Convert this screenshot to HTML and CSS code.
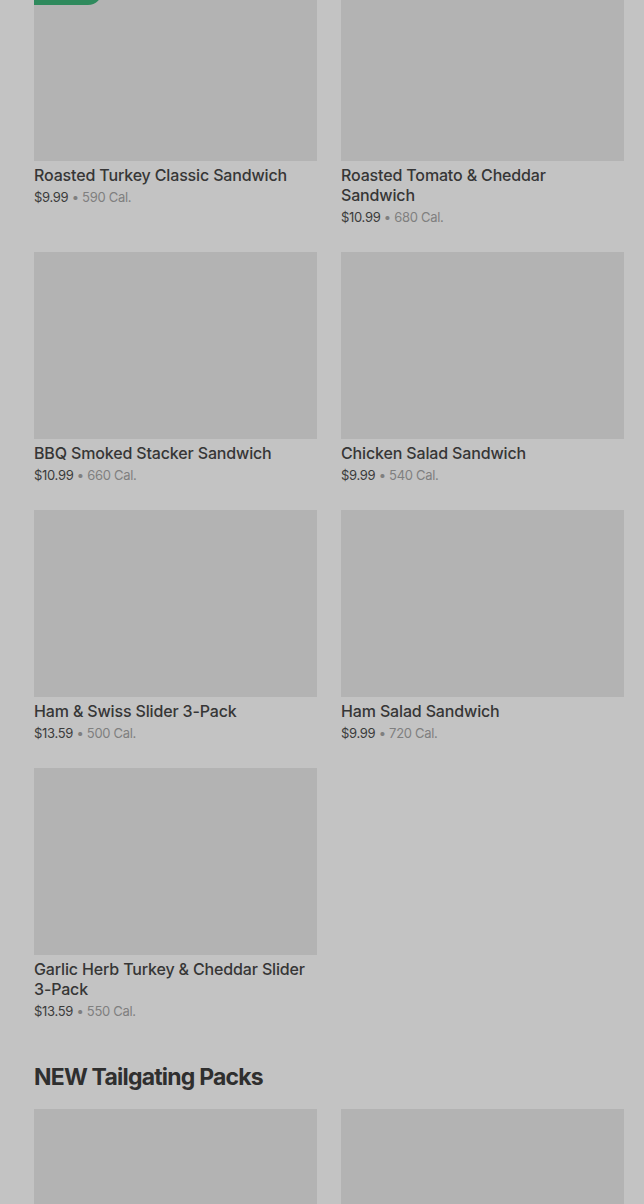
FILE: index.html
```html
<!DOCTYPE html>
<html lang="en">

<head>
    <meta charset="UTF-8">
    <meta name="viewport" content="width=device-width, initial-scale=1.0">
    <title>menu</title>
    <link rel="stylesheet" href="styles.css">
</head>

<body>

    <div class="page">
        <div class="grid">
            <div class="card">
                <div class="photo">
                    <span class="badge">Popular</span>
                </div>
                <h3 class="name">Roasted Turkey Classic Sandwich</h3>
                <p class="meta"><span class="price">$9.99</span> • 590 Cal.</p>
            </div>
            <div class="card">
                <div class="photo"></div>
                <h3 class="name">Roasted Tomato &amp; Cheddar Sandwich</h3>
                <p class="meta"><span class="price">$10.99</span> • 680 Cal.</p>
            </div>
            <div class="card">
                <div class="photo"></div>
                <h3 class="name">BBQ Smoked Stacker Sandwich</h3>
                <p class="meta"><span class="price">$10.99</span> • 660 Cal.</p>
            </div>
            <div class="card">
                <div class="photo"></div>
                <h3 class="name">Chicken Salad Sandwich</h3>
                <p class="meta"><span class="price">$9.99</span> • 540 Cal.</p>
            </div>
            <div class="card">
                <div class="photo"></div>
                <h3 class="name">Ham &amp; Swiss Slider 3-Pack</h3>
                <p class="meta"><span class="price">$13.59</span> • 500 Cal.</p>
            </div>
            <div class="card">
                <div class="photo"></div>
                <h3 class="name">Ham Salad Sandwich</h3>
                <p class="meta"><span class="price">$9.99</span> • 720 Cal.</p>
            </div>
            <div class="card">
                <div class="photo"></div>
                <h3 class="name">Garlic Herb Turkey &amp; Cheddar Slider 3-Pack</h3>
                <p class="meta"><span class="price">$13.59</span> • 550 Cal.</p>
            </div>
        </div>

        <h2 class="section-title">NEW Tailgating Packs</h2>

        <div class="grid">
            <div class="card">
                <div class="photo"></div>
            </div>
            <div class="card">
                <div class="photo"></div>
            </div>
        </div>
    </div>

</body>

</html>
```

FILE: styles.css
```css
* {
    box-sizing: border-box;
    padding: 0;
    margin: 0;
}

body {
    background-color: #c3c3c3;
    font-family: Inter, 'Noto Sans', sans-serif;
    color: #363636;
    overflow: hidden;
}

/* page is scrolled a bit, first row of photos is cut at the top */
.page {
    margin-top: -26px;
    padding: 0 20px 0 34px;
}

.grid {
    display: grid;
    grid-template-columns: 1fr 1fr;
    column-gap: 24px;
    row-gap: 26px;
}

.photo {
    position: relative;
    height: 187px;
    background-color: #b3b3b3;
}

.badge {
    position: absolute;
    top: 0;
    left: 0;
    height: 31px;
    width: 68px;
    padding: 8px 0 0 12px;
    background-color: #2f8a5d;
    color: #9fd0b4;
    font-size: 12px;
    border-radius: 0 0 14px 0;
}

.name {
    margin-top: 4px;
    padding-right: 6px;
    font-size: 16px;
    font-weight: 500;
    line-height: 20px;
    letter-spacing: -0.15px;
    color: #363636;
}

.meta {
    margin-top: 3px;
    font-size: 13px;
    line-height: 18px;
    letter-spacing: -0.3px;
    color: #7f7f7f;
}

.price {
    color: #3b3b3b;
}

.section-title {
    margin: 41px 0 16px;
    font-size: 23px;
    line-height: 32px;
    font-weight: 700;
    letter-spacing: -0.8px;
    color: #2f2f2f;
}
```
